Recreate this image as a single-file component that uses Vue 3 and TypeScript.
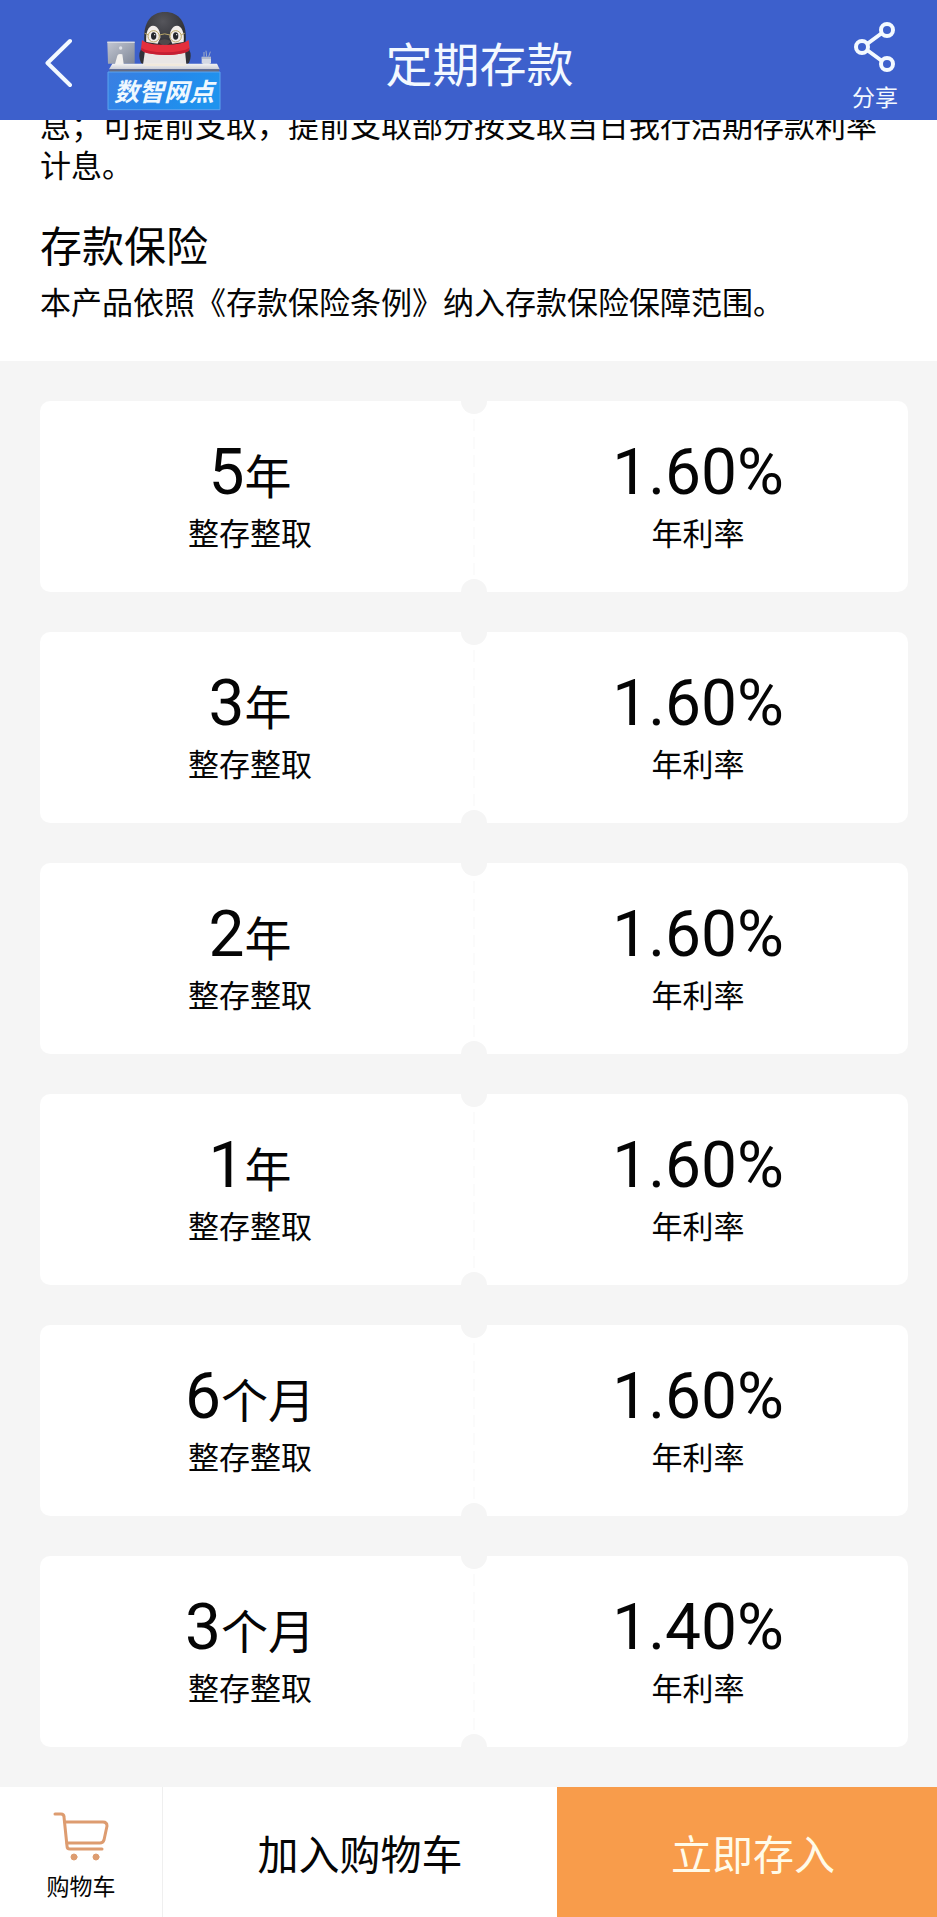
<script setup lang="ts">
interface Deposit {
  amount: string
  unit: string
  kind: string
  rate: string
}

const kind = '整存整取'
const deposits: Deposit[] = [
  { amount: '5', unit: '年', kind, rate: '1.60%' },
  { amount: '3', unit: '年', kind, rate: '1.60%' },
  { amount: '2', unit: '年', kind, rate: '1.60%' },
  { amount: '1', unit: '年', kind, rate: '1.60%' },
  { amount: '6', unit: '个月', kind, rate: '1.60%' },
  { amount: '3', unit: '个月', kind, rate: '1.40%' },
]
</script>

<template>
  <div class="page">
    <header class="topbar">
      <div class="topbar-left">
        <button type="button" class="back" aria-label="返回">
          <svg width="28" height="50" viewBox="0 0 28 50" fill="none" stroke="#f3f9ff" stroke-width="4" stroke-linecap="round" stroke-linejoin="round">
            <path d="M25 3 2.500 25 25 47" />
          </svg>
        </button>
        <a href="#" class="branch">
          <svg class="branch-art" width="114" height="102" viewBox="0 0 342 306" aria-hidden="true">
            <defs>
              <linearGradient id="sign" x1="0" y1="0" x2="1" y2="0.300">
                <stop offset="0" stop-color="#3b7fe2" />
                <stop offset="0.600" stop-color="#2588ea" />
                <stop offset="1" stop-color="#1f93ee" />
              </linearGradient>
              <linearGradient id="screen" x1="0" y1="0" x2="1" y2="1">
                <stop offset="0" stop-color="#c3c7d2" />
                <stop offset="1" stop-color="#7f8798" />
              </linearGradient>
              <radialGradient id="head" cx="0.450" cy="0.250" r="0.700">
                <stop offset="0" stop-color="#55555b" />
                <stop offset="1" stop-color="#28292f" />
              </radialGradient>
              <linearGradient id="desk" x1="0" y1="0" x2="0" y2="1">
                <stop offset="0" stop-color="#f4f3f2" />
                <stop offset="1" stop-color="#c9ccd6" />
              </linearGradient>
            </defs>
            <ellipse cx="112" cy="138" rx="15" ry="26" fill="#303138" />
            <ellipse cx="236" cy="138" rx="15" ry="26" fill="#303138" />
            <path d="M114 122h120l4 42H108z" fill="#e9e6e5" />
            <path d="M112 92C108 38 132 6 174 6s66 32 62 86c-2 20-24 28-62 28s-60-8-62-28z" fill="url(#head)" />
            <path d="M118 96c-3-28 6-49 20-49 15 0 22 18 22 36l-8 18z" fill="#f3eeec" />
            <path d="M230 96c3-28-6-49-20-49-15 0-22 18-22 36l8 18z" fill="#f3eeec" />
            <ellipse cx="140" cy="78" rx="8" ry="11" fill="#25262c" />
            <ellipse cx="206" cy="78" rx="8" ry="11" fill="#25262c" />
            <circle cx="143" cy="74" r="2" fill="#fff" />
            <circle cx="209" cy="74" r="2" fill="#fff" />
            <g fill="none" stroke="#b9a667" stroke-width="3">
              <circle cx="140" cy="79" r="17" />
              <circle cx="206" cy="79" r="17" />
              <path d="M157 75q16-7 32 0M123 74l-10-4M223 74l10-4" />
            </g>
            <path d="M155 93q18-10 36 0-4 12-18 13-14-1-18-13z" fill="#50494b" />
            <path d="M105 90q14 14 69 15 55-1 71-15l3 26q-10 17-74 19-62-2-72-17z" fill="#e42f3d" />
            <path d="M103 113q18 13 71 14 54-1 73-14l-1 9q-15 12-72 13-59-1-71-14z" fill="#c51f33" />
            <path d="M1 95h82v66H3z" fill="url(#screen)" />
            <path d="M1 95h82v4H1z" fill="#d9dce4" />
            <path d="M31 137q2-8 15-4l4 29H24z" fill="#f2f0ee" />
            <circle cx="41" cy="114" r="5" fill="#dfe2e8" />
            <path d="M284 140h28v20q-14 7-28 0z" fill="#d3d8e4" />
            <path d="M291 140v-14M299 140l-2-18M305 140l5-15" stroke="#9eabc8" stroke-width="3" />
            <path d="M284 144h28" stroke="#8f9bb5" stroke-width="3" />
            <path d="M16 161h314l8 17H6z" fill="url(#desk)" />
            <path d="M112 161h124v7H112z" fill="#f1e9dc" />
            <path d="M8 178h328v8H8z" fill="#626b85" />
            <path d="M3 186h336v113H3z" fill="url(#sign)" stroke="#5ba4ef" stroke-width="3" />
          </svg>
          <span class="branch-name">数智网点</span>
        </a>
      </div>
      <h1 class="title">定期存款</h1>
      <button type="button" class="share">
        <svg width="44" height="54" viewBox="0 0 44 54" fill="none" stroke="#f3f9ff" stroke-width="4">
          <circle cx="34" cy="10" r="6" />
          <circle cx="9" cy="27" r="6" />
          <circle cx="34" cy="44" r="6" />
          <path d="M29 13 14 24M14 30l15 11" />
        </svg>
        <span>分享</span>
      </button>
    </header>

    <main>
      <section class="terms">
        <p>息；可提前支取，提前支取部分按支取当日我行活期存款利率计息。</p>
        <h2>存款保险</h2>
        <p>本产品依照《存款保险条例》纳入存款保险保障范围。</p>
      </section>

      <ul class="deposits">
        <li v-for="item in deposits" :key="item.amount + item.unit" class="deposit">
          <div class="half">
            <div class="value">{{ item.amount }}<span class="unit">{{ item.unit }}</span></div>
            <div class="label">{{ item.kind }}</div>
          </div>
          <div class="half">
            <div class="value">{{ item.rate }}</div>
            <div class="label">年利率</div>
          </div>
        </li>
      </ul>
    </main>

    <footer class="actions">
      <button type="button" class="cart">
        <svg width="56" height="50" viewBox="0 0 56 50" fill="none" stroke="#dd9c70" stroke-width="3" stroke-linecap="round" stroke-linejoin="round">
          <path d="M2 3h6q3 0 3 3l3 29q0 3 3 3h32" />
          <path d="M12 11h38q4 0 4 4l-3 14q-1 3-4 3H14" />
          <circle cx="21" cy="46" r="3" fill="#dd9c70" stroke-width="1" />
          <circle cx="43" cy="46" r="3" fill="#dd9c70" stroke-width="1" />
        </svg>
        <span>购物车</span>
      </button>
      <button type="button" class="add">加入购物车</button>
      <button type="button" class="buy">立即存入</button>
    </footer>
  </div>
</template>

<style>
body {
  margin: 0;
  background: #f5f5f5;
}
</style>

<style scoped>
.page {
  display: flex;
  flex-direction: column;
  min-height: 100vh;
  font-family: "Noto Sans CJK SC", sans-serif;
  color: #050505;
  background: #f5f5f5;
}

button {
  margin: 0;
  padding: 0;
  border: 0;
  background: none;
  color: inherit;
  font: inherit;
  cursor: pointer;
}

svg {
  display: block;
}

.topbar {
  position: sticky;
  top: 0;
  z-index: 1;
  display: grid;
  grid-template-columns: 236px 1fr 214px;
  align-items: center;
  height: 120px;
  background: #3d60cc;
  color: #f3f9ff;
}

.topbar-left {
  display: flex;
  align-items: center;
  gap: 34px;
  padding-left: 45px;
}

.back {
  padding-top: 6px;
}

.branch {
  position: relative;
  padding-top: 2px;
  color: #eef8ff;
  text-decoration: none;
}

.branch-name {
  position: absolute;
  left: 0;
  right: 0;
  bottom: 4px;
  text-align: center;
  font-size: 25px;
  line-height: 36px;
  font-weight: 700;
  font-style: italic;
}

.title {
  margin: 0;
  padding-top: 4px;
  text-align: center;
  font-size: 47px;
  line-height: 56px;
  font-weight: 400;
}

.share {
  justify-self: end;
  display: flex;
  flex-direction: column;
  align-items: center;
  gap: 6px;
  margin-right: 39px;
  padding-top: 12px;
  font-size: 23px;
  line-height: 32px;
}

.terms {
  margin-top: -16px;
  padding: 0 40px 40px;
  background: #fff;
}

.terms p {
  margin: 0;
  font-size: 31px;
  line-height: 40px;
}

.terms h2 {
  margin: 32px 0 9px;
  font-size: 42px;
  line-height: 56px;
  font-weight: 400;
}

.deposits {
  display: flex;
  flex-direction: column;
  gap: 40px;
  margin: 0;
  padding: 40px 29px 40px 40px;
  list-style: none;
}

.deposit {
  position: relative;
  display: grid;
  grid-template-columns: 1fr 1fr;
  column-gap: 28px;
  padding: 40px 0 39px;
  overflow: hidden;
  border-radius: 10px;
  background:
    repeating-linear-gradient(#fbfbfb 0 12px, #fff 12px 18px) center / 2px 100% no-repeat,
    #fff;
}

.deposit::before,
.deposit::after {
  content: "";
  position: absolute;
  left: 50%;
  width: 26px;
  height: 26px;
  margin-left: -13px;
  border-radius: 50%;
  background: #f5f5f5;
}

.deposit::before {
  top: -13px;
}

.deposit::after {
  bottom: -13px;
}

.half {
  text-align: center;
}

.value {
  height: 70px;
  font-family: Roboto, "Noto Sans CJK SC", sans-serif;
  font-size: 64px;
  line-height: 64px;
}

.unit {
  font-family: "Noto Sans CJK SC", sans-serif;
  font-size: 47px;
}

.label {
  font-size: 31px;
  line-height: 42px;
}

.actions {
  position: sticky;
  bottom: 0;
  z-index: 1;
  display: grid;
  grid-template-columns: 163fr 394fr 380fr;
  height: 130px;
  margin-top: auto;
  background: #fff;
  font-size: 41px;
}

.cart {
  display: flex;
  flex-direction: column;
  align-items: center;
  justify-content: center;
  gap: 8px;
  padding-top: 8px;
  border-right: 1px solid #efefef;
  font-size: 23px;
  line-height: 32px;
}

.buy {
  padding-left: 12px;
  background: #f89c4b;
  color: #fffbe9;
}
</style>
